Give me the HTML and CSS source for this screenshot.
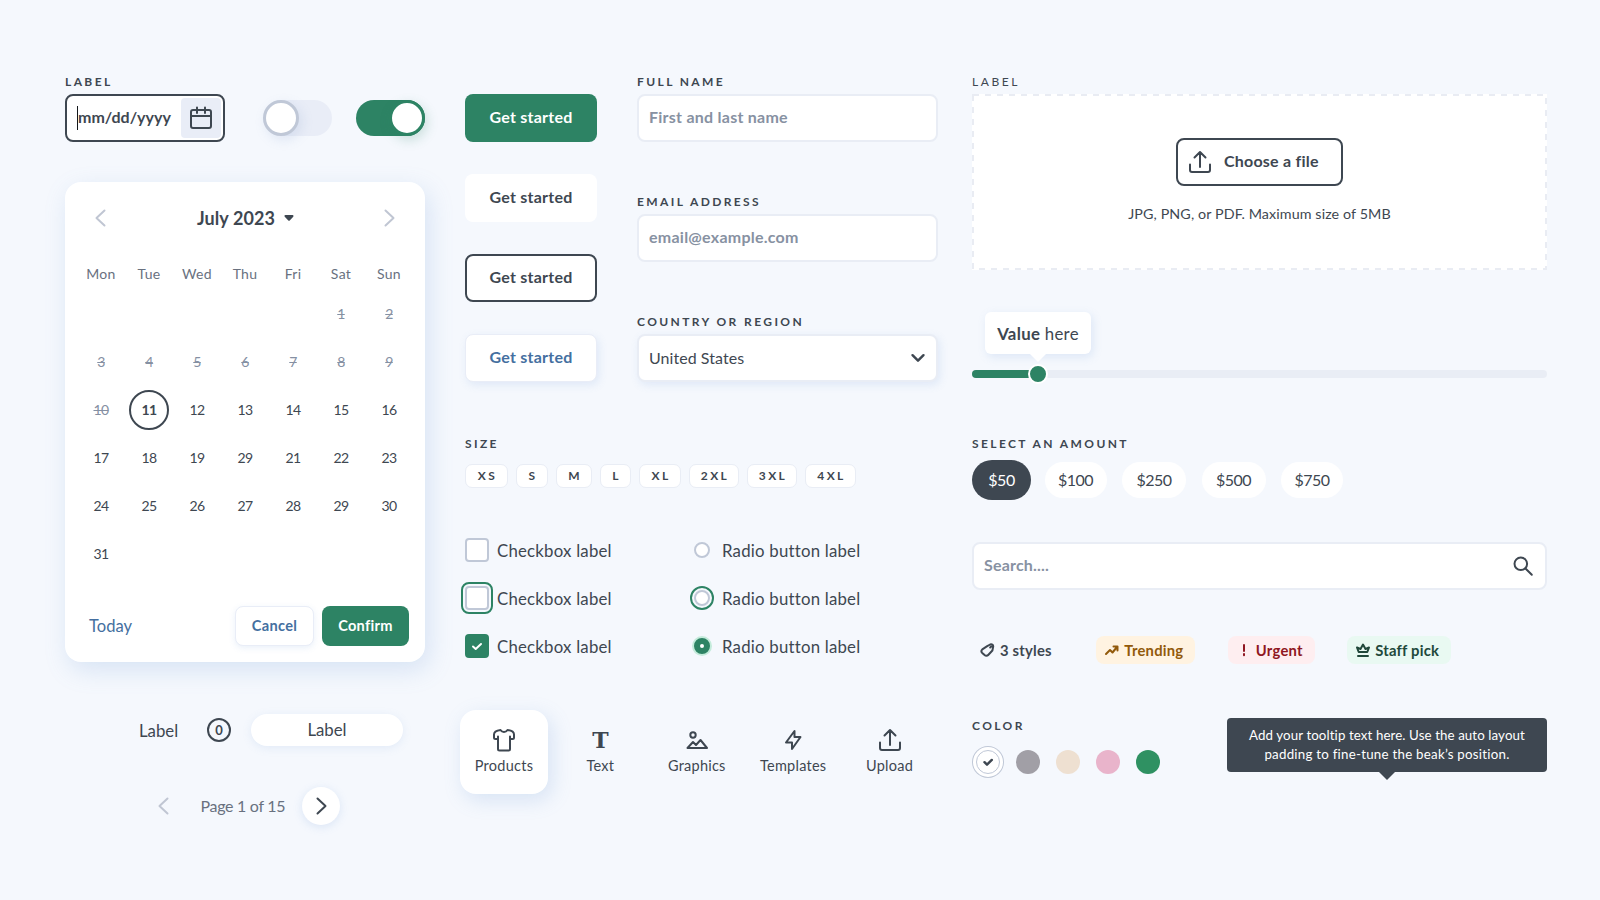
FILE: index.html
```html
<!DOCTYPE html>
<html lang="en">
<head>
    <meta charset="UTF-8">
    <meta name="viewport" content="width=device-width, initial-scale=1.0">
    <title>UI Components</title>
    <link rel="stylesheet" href="styles.css">
</head>
<body>
    <div class="page">
        <!-- Date, toggles, calendar -->
        <div class="col col-left">
            <div class="top-row">
                <div class="field date-field">
                    <label class="label">LABEL</label>
                    <div class="date-input">
                        <span class="date-text">mm/dd/yyyy</span>
                        <button class="date-btn">
                            <svg class="icon" width="24" height="24" viewBox="0 0 24 24"><rect x="2" y="4" width="20" height="18" rx="2"/><path d="M2 10h20M8 1.5V7M16 1.5V7"/></svg>
                        </button>
                    </div>
                </div>
                <div class="toggle"><div class="knob"></div></div>
                <div class="toggle on"><div class="knob"></div></div>
            </div>

            <div class="calendar">
                <div class="cal-header">
                    <svg class="icon pale" width="24" height="24" viewBox="0 0 24 24"><path d="M15.5 4.5L7.5 12l8 7.5"/></svg>
                    <div class="cal-title">July 2023 <svg class="caret" width="10" height="6" viewBox="0 0 10 6"><path d="M1.500 1h7L5 4.800z"/></svg></div>
                    <svg class="icon pale" width="24" height="24" viewBox="0 0 24 24"><path d="M8.5 4.5l8 7.5-8 7.5"/></svg>
                </div>
                <div class="weekdays">
                    <span>Mon</span><span>Tue</span><span>Wed</span><span>Thu</span><span>Fri</span><span>Sat</span><span>Sun</span>
                </div>
                <div class="days">
                    <span class="past first">1</span><span class="past">2</span>
                    <span class="past">3</span><span class="past">4</span><span class="past">5</span><span class="past">6</span><span class="past">7</span><span class="past">8</span><span class="past">9</span>
                    <span class="past">10</span><span class="today">11</span><span>12</span><span>13</span><span>14</span><span>15</span><span>16</span>
                    <span>17</span><span>18</span><span>19</span><span>29</span><span>21</span><span>22</span><span>23</span>
                    <span>24</span><span>25</span><span>26</span><span>27</span><span>28</span><span>29</span><span>30</span>
                    <span>31</span>
                </div>
                <div class="cal-footer">
                    <a class="today-link">Today</a>
                    <button class="btn-small cancel">Cancel</button>
                    <button class="btn-small confirm">Confirm</button>
                </div>
            </div>

            <div class="segment">
                <div class="segment-left">Label <span class="count">0</span></div>
                <div class="segment-pill">Label</div>
            </div>

            <div class="pagination">
                <svg class="icon pale" width="24" height="24" viewBox="0 0 24 24"><path d="M15.5 4.5L7.5 12l8 7.5"/></svg>
                <span class="page-text">Page 1 of 15</span>
                <button class="page-next">
                    <svg class="icon" width="24" height="24" viewBox="0 0 24 24"><path d="M8.500 4.500l8 7.500-8 7.500"/></svg>
                </button>
            </div>
        </div>

        <!-- Buttons, inputs, choices, tabs -->
        <div class="col col-mid">
            <div class="forms">
                <div class="buttons">
                    <button class="btn primary">Get started</button>
                    <button class="btn plain">Get started</button>
                    <button class="btn outline">Get started</button>
                    <button class="btn raised">Get started</button>
                </div>
                <div class="fields">
                    <div class="field">
                        <label class="label" for="name">FULL NAME</label>
                        <input class="input" type="text" id="name" placeholder="First and last name">
                    </div>
                    <div class="field">
                        <label class="label" for="email">EMAIL ADDRESS</label>
                        <input class="input" type="text" id="email" placeholder="email@example.com">
                    </div>
                    <div class="field">
                        <label class="label">COUNTRY OR REGION</label>
                        <div class="input select">
                            <span>United States</span>
                            <svg class="icon thick" width="16" height="16" viewBox="0 0 16 16"><path d="M2.5 6.200L8 11.700l5.500-5.500"/></svg>
                        </div>
                    </div>
                </div>
            </div>

            <div class="sizes">
                <div class="label">SIZE</div>
                <div class="size-list">
                    <span class="size w43">XS</span><span class="size w32">S</span><span class="size w36">M</span><span class="size w31">L</span><span class="size w42">XL</span><span class="size w50">2XL</span><span class="size w50">3XL</span><span class="size w51">4XL</span>
                </div>
            </div>

            <div class="choices">
                <div class="choice"><span class="check"></span><span class="choice-text">Checkbox label</span></div>
                <div class="choice"><span class="radio-slot"><span class="radio"></span></span><span class="choice-text">Radio button label</span></div>
                <div class="choice"><span class="check focus"></span><span class="choice-text">Checkbox label</span></div>
                <div class="choice"><span class="radio-slot"><span class="radio focus"></span></span><span class="choice-text">Radio button label</span></div>
                <div class="choice"><span class="check checked"><svg class="icon thick" width="24" height="24" viewBox="0 0 24 24"><path d="M8 12.5l2.700 2.500L16 10"/></svg></span><span class="choice-text">Checkbox label</span></div>
                <div class="choice"><span class="radio-slot"><span class="radio selected"></span></span><span class="choice-text">Radio button label</span></div>
            </div>

            <div class="tabs">
                <div class="tab active">
                    <svg class="icon" width="24" height="24" viewBox="0 0 24 24"><path d="M6 8.500V21a1.500 1.500 0 0 0 1.500 1.500h9A1.500 1.500 0 0 0 18 21V8.500"/><path d="M6 11H3.500A1.500 1.500 0 0 1 2 9.500V6.500C2 4 4 2.500 8.500 2c1 1.500 2 2 3.500 2s2.500-.5 3.500-2C20 2.500 22 4 22 6.500v3a1.500 1.500 0 0 1-1.500 1.500H18"/></svg>
                    Products
                </div>
                <div class="tab">
                    <span class="t-icon">T</span>
                    Text
                </div>
                <div class="tab">
                    <svg class="icon" width="24" height="24" viewBox="0 0 24 24"><circle cx="8" cy="7" r="2.700"/><path d="M2.500 20L8 14l3 3 4.500-5 6.500 8z"/></svg>
                    Graphics
                </div>
                <div class="tab">
                    <svg class="icon" width="24" height="24" viewBox="0 0 24 24"><path d="M13.500 3L5 14.500H11L11 21l8.500-12h-6z"/></svg>
                    Templates
                </div>
                <div class="tab">
                    <svg class="icon" width="24" height="24" viewBox="0 0 24 24"><path d="M2 14.500V20a2 2 0 0 0 2 2h16a2 2 0 0 0 2-2v-5.500M12 17V2M6.500 7.500L12 2l5.500 5.500"/></svg>
                    Upload
                </div>
            </div>
        </div>

        <!-- Upload, slider, tags, colors -->
        <div class="col col-right">
            <div class="label light">LABEL</div>
            <div class="dropzone">
                <svg class="dash" width="575" height="176"><rect x="1" y="1" width="573" height="174"/></svg>
                <button class="file-btn">
                    <svg class="icon" width="24" height="24" viewBox="0 0 24 24"><path d="M2 14.500V20a2 2 0 0 0 2 2h16a2 2 0 0 0 2-2v-5.500M12 17V2M6.500 7.500L12 2l5.500 5.500"/></svg>
                    <span>Choose a file</span>
                </button>
                <p class="hint">JPG, PNG, or PDF. Maximum size of 5MB</p>
            </div>

            <div class="slider">
                <div class="bubble"><b>Value</b> here</div>
                <div class="track">
                    <div class="track-fill"></div>
                    <div class="handle"></div>
                </div>
            </div>

            <div class="amounts">
                <div class="label">SELECT AN AMOUNT</div>
                <div class="amount-list">
                    <span class="amount selected">$50</span><span class="amount narrow">$100</span><span class="amount">$250</span><span class="amount">$500</span><span class="amount narrow">$750</span>
                </div>
            </div>

            <div class="search">
                <input class="search-input" type="text" placeholder="Search....">
                <svg class="icon" width="24" height="24" viewBox="0 0 24 24"><circle cx="9.800" cy="9.800" r="6.300"/><path d="M14.500 14.500l6.300 6.300"/></svg>
            </div>

            <div class="tags">
                <span class="tag"><svg class="icon" width="16" height="16" viewBox="0 0 16 16"><path d="M7.200 4.200L10.200 2.500c1.500-.8 3.200.3 3 2L12.400 8.500 8.200 13a2.500 2.500 0 0 1-3.600.1L2.200 10.900a2.500 2.500 0 0 1 .1-3.500zM10.200 5.500l1-1"/></svg><span>3 styles</span></span>
                <span class="tag trending"><svg class="icon" width="16" height="16" viewBox="0 0 16 16"><path d="M2 12l4-4 2.500 2.500L13 5M9.500 4.500H13.500V8.500"/></svg><span>Trending</span></span>
                <span class="tag urgent"><svg class="icon" width="16" height="16" viewBox="0 0 16 16"><path d="M8 3v6M8 12v1.200"/></svg><span>Urgent</span></span>
                <span class="tag staff"><svg class="icon" width="16" height="16" viewBox="0 0 16 16"><path d="M3.700 10L2 5.500l3.500 1.500L8 2.500l2.500 4.500L14 5.500 12.300 10zM3 14h10"/></svg><span>Staff pick</span></span>
            </div>

            <div class="bottom-row">
                <div class="colors">
                    <div class="label">COLOR</div>
                    <div class="swatches">
                        <span class="swatch white"><svg class="icon thick" width="24" height="24" viewBox="0 0 24 24"><path d="M8.500 12.200l2.500 2.500 4.800-4.800"/></svg></span>
                        <span class="swatch gray"></span>
                        <span class="swatch sand"></span>
                        <span class="swatch pink"></span>
                        <span class="swatch green"></span>
                    </div>
                </div>
                <div class="tooltip">Add your tooltip text here. Use the auto layout<br><span class="wide">padding to fine-tune the beak’s position.</span></div>
            </div>
        </div>
    </div>
</body>
</html>
```
FILE: styles.css
```css
* {
    box-sizing: border-box;
}
body {
    margin: 0;
    background-color: #f5f8fd;
    font-family: Lato, "Open Sans", sans-serif;
    font-size: 16px;
    color: #3e4751;
}
button, input {
    font-family: inherit;
    margin: 0;
    padding: 0;
}
button {
    border: none;
    cursor: pointer;
    color: #3e4751;
}
.page {
    display: flex;
    width: 1600px;
    height: 900px;
    padding: 70px 0 0 65px;
    overflow: hidden;
}
.col {
    flex: none;
}
.col-left {
    width: 360px;
    margin-right: 40px;
}
.col-mid {
    width: 473px;
    margin-right: 34px;
}
.col-right {
    width: 575px;
}
.label {
    display: block;
    height: 24px;
    line-height: 24px;
    font-size: 12px;
    font-weight: bold;
    letter-spacing: 2.4px;
    white-space: nowrap;
}
.icon {
    display: block;
    flex: none;
    fill: none;
    stroke: #3e4751;
    stroke-width: 2;
    stroke-linecap: round;
    stroke-linejoin: round;
}
.icon.thick {
    stroke-width: 2.4;
}
.icon.pale {
    stroke: #c0c6d3;
}

/* date + toggles */
.top-row {
    display: flex;
    align-items: flex-end;
}
.date-field {
    width: 160px;
    margin-right: 38px;
}
.date-input {
    display: flex;
    align-items: center;
    justify-content: space-between;
    height: 48px;
    padding: 0 2px 0 10px;
    border: 2px solid #3e4751;
    border-radius: 8px;
    background-color: #fff;
}
.date-text {
    height: 24px;
    border-left: 1px solid #14181c;
    font-weight: bold;
    line-height: 22px;
}
.date-btn {
    display: flex;
    align-items: center;
    justify-content: center;
    width: 40px;
    height: 40px;
    border-radius: 4px;
    background-color: #e9edf7;
}
.toggle {
    width: 69px;
    height: 36px;
    margin-bottom: 6px;
    border-radius: 18px;
    background-color: #e9edf7;
}
.toggle .knob {
    width: 36px;
    height: 36px;
    border: 3px solid #c0c8d7;
    border-radius: 50%;
    background-color: #fff;
    box-shadow: 3px 4px 12px rgba(120, 150, 200, 0.18);
}
.toggle.on {
    display: flex;
    justify-content: flex-end;
    margin-left: 24px;
    background-color: #2d8364;
}
.toggle.on .knob {
    border-color: #2d8364;
    box-shadow: 2px 4px 12px rgba(45, 131, 100, 0.22);
}

/* calendar */
.calendar {
    height: 480px;
    margin-top: 40px;
    padding: 24px 12px 16px;
    border-radius: 16px;
    background-color: #fff;
    box-shadow: 4px 8px 24px rgba(110, 155, 215, 0.22);
}
.cal-header {
    display: flex;
    align-items: center;
    justify-content: space-between;
    height: 24px;
    padding: 0 12px;
    margin-bottom: 28px;
}
.cal-title {
    display: flex;
    align-items: center;
    gap: 9px;
    margin-left: 1px;
    font-size: 18px;
    font-weight: bold;
    letter-spacing: 0.1px;
}
.caret {
    fill: #3e4751;
    stroke: #3e4751;
    stroke-width: 2;
    stroke-linejoin: round;
}
.weekdays, .days {
    display: grid;
    grid-template-columns: repeat(7, 48px);
    font-size: 14px;
    text-align: center;
}
.weekdays {
    line-height: 32px;
    color: #69717f;
    letter-spacing: 0.3px;
}
.days {
    grid-auto-rows: 48px;
    line-height: 48px;
    letter-spacing: -0.6px;
}
.days .past {
    color: #8590a3;
    text-decoration: line-through;
}
.days .first {
    grid-column: 6;
}
.days .today {
    width: 40px;
    height: 40px;
    margin: 4px;
    line-height: 36px;
    border: 2px solid #3e4751;
    border-radius: 50%;
    font-weight: bold;
}
.cal-footer {
    display: flex;
    align-items: center;
    gap: 8px;
    margin-top: 28px;
    padding: 0 4px 0 12px;
}
.today-link {
    margin-right: auto;
    color: #446fa0;
    font-size: 16.6px;
}
.btn-small {
    height: 40px;
    padding-bottom: 1px;
    border-radius: 8px;
    font-size: 14.6px;
    font-weight: bold;
    letter-spacing: 0.3px;
}
.cancel {
    width: 79px;
    border: 1px solid #e9edf7;
    background-color: #fff;
    color: #446fa0;
    box-shadow: 0 2px 6px rgba(110, 155, 215, 0.15);
}
.confirm {
    width: 87px;
    background-color: #2d8364;
    color: #fff;
}

/* segmented label */
.segment {
    display: flex;
    align-items: center;
    height: 32px;
    margin: 52px 0 0 73px;
    font-size: 16.8px;
}
.segment-left {
    display: flex;
    align-items: center;
    justify-content: space-between;
    width: 93px;
    padding-left: 1px;
}
.count {
    width: 24px;
    height: 24px;
    border: 2px solid #3e4751;
    border-radius: 50%;
    font-size: 13px;
    font-weight: bold;
    line-height: 20px;
    text-align: center;
}
.segment-pill {
    width: 152px;
    margin-left: 20px;
    border-radius: 16px;
    background-color: #fff;
    line-height: 32px;
    text-align: center;
    box-shadow: 0 2px 10px rgba(110, 155, 215, 0.14);
}
.pagination {
    display: flex;
    align-items: center;
    margin: 41px 0 0 87px;
}
.page-text {
    margin-left: 24.5px;
    width: 84.5px;
    padding-bottom: 1px;
    color: #69717f;
    letter-spacing: -0.3px;
    white-space: nowrap;
}
.page-next {
    display: flex;
    align-items: center;
    justify-content: center;
    width: 38px;
    height: 38px;
    margin-left: 17px;
    border-radius: 50%;
    background-color: #fff;
    box-shadow: 0 2px 10px rgba(110, 155, 215, 0.2);
}

/* buttons + inputs */
.forms {
    display: flex;
    gap: 40px;
}
.buttons {
    display: flex;
    flex-direction: column;
    gap: 32px;
    width: 132px;
    padding-top: 24px;
}
.btn {
    height: 48px;
    padding-bottom: 3px;
    border-radius: 8px;
    font-size: 16px;
    font-weight: bold;
    letter-spacing: 0.25px;
}
.primary {
    background-color: #2d8364;
    color: #fff;
}
.plain, .outline, .raised {
    background-color: #fff;
}
.outline {
    border: 2px solid #3e4751;
}
.raised {
    border: 1px solid #e9edf7;
    color: #446fa0;
    box-shadow: 2px 3px 8px rgba(110, 155, 215, 0.16);
}
.fields {
    display: flex;
    flex-direction: column;
    gap: 48px;
    width: 301px;
}
.input {
    display: block;
    width: 100%;
    height: 48px;
    padding: 0 10px 3px;
    border: 2px solid #e9edf5;
    border-radius: 8px;
    background-color: #fff;
    font-size: 16px;
    font-weight: bold;
    letter-spacing: 0.25px;
}
.input::placeholder, .search-input::placeholder {
    color: #8791a2;
    opacity: 1;
}
.select {
    display: flex;
    align-items: center;
    justify-content: space-between;
    padding-bottom: 2px;
    font-weight: normal;
    letter-spacing: 0.05px;
    box-shadow: 2px 3px 8px rgba(110, 155, 215, 0.16);
}

/* sizes */
.sizes {
    margin-top: 50px;
}
.size-list {
    display: flex;
    gap: 8px;
    margin-top: 8px;
}
.size {
    height: 24px;
    padding-left: 2px;
    border: 1px solid #e9edf5;
    border-radius: 7px;
    background-color: #fff;
    font-size: 12px;
    font-weight: bold;
    line-height: 22px;
    letter-spacing: 2.4px;
    text-align: center;
}
.w31 { width: 31px; }
.w32 { width: 32px; }
.w36 { width: 36px; }
.w42 { width: 42px; }
.w43 { width: 43px; }
.w50 { width: 50px; }
.w51 { width: 51px; }

/* checkboxes + radios */
.choices {
    display: grid;
    grid-template-columns: 225px 1fr;
    row-gap: 24px;
    margin-top: 50px;
}
.choice {
    display: flex;
    align-items: center;
    gap: 8px;
    height: 24px;
}
.choice-text {
    font-size: 16.8px;
    letter-spacing: 0.22px;
}
.check {
    width: 24px;
    height: 24px;
    border: 2px solid #c0c8d7;
    border-radius: 4px;
    background-color: #fff;
}
.check.focus {
    outline: 2px solid #2d8364;
    outline-offset: 2px;
}
.checked {
    border: none;
    background-color: #2d8364;
}
.checked .icon {
    stroke: #fff;
    stroke-width: 2;
}
.radio-slot {
    display: flex;
    align-items: center;
    justify-content: center;
    width: 24px;
    height: 24px;
}
.radio {
    width: 16px;
    height: 16px;
    border: 2px solid #c0c8d7;
    border-radius: 50%;
    background-color: #fff;
}
.radio.focus {
    outline: 2px solid #2d8364;
    outline-offset: 2px;
}
.radio.selected {
    border: 6px solid #2d8364;
    box-shadow: 0 0 0 2px #c4ebdb;
}

/* tabs */
.tabs {
    display: flex;
    gap: 8.4px;
    margin: 52px 0 0 -5px;
}
.tab {
    display: flex;
    flex-direction: column;
    align-items: center;
    width: 88px;
    height: 84px;
    padding-top: 18px;
    border-radius: 16px;
    font-size: 14.5px;
    line-height: 28px;
    letter-spacing: 0.25px;
}
.tab.active {
    background-color: #fff;
    box-shadow: 4px 6px 20px rgba(110, 155, 215, 0.22);
}
.t-icon {
    height: 24px;
    font-family: "DejaVu Serif", serif;
    font-size: 22px;
    font-weight: bold;
    line-height: 24px;
    letter-spacing: 0;
}

/* upload */
.label.light {
    font-weight: normal;
    letter-spacing: 2.6px;
}
.dropzone {
    position: relative;
    display: flex;
    flex-direction: column;
    align-items: center;
    height: 176px;
    padding-top: 44px;
    background-color: #fff;
}
.dash {
    position: absolute;
    top: 0;
    left: 0;
    fill: none;
    stroke: #e9ecf3;
    stroke-width: 2;
    stroke-dasharray: 6 6;
}
.file-btn {
    display: flex;
    align-items: center;
    gap: 12px;
    width: 167px;
    height: 48px;
    padding-left: 10px;
    border: 2px solid #3e4751;
    border-radius: 8px;
    background-color: #fff;
    font-size: 16px;
    font-weight: bold;
    letter-spacing: 0.22px;
}
.file-btn span {
    padding-bottom: 3px;
}
.hint {
    margin: 18px 0 0;
    font-size: 14.3px;
    line-height: 20px;
    letter-spacing: 0.1px;
}

/* slider */
.slider {
    margin-top: 42px;
}
.bubble {
    position: relative;
    width: 106px;
    height: 42px;
    margin: 0 0 16px 13px;
    border-radius: 6px;
    background-color: #fff;
    font-size: 16.8px;
    line-height: 43px;
    letter-spacing: 0.3px;
    text-align: center;
    box-shadow: 2px 3px 10px rgba(110, 155, 215, 0.18);
}
.bubble::after {
    content: "";
    position: absolute;
    top: 42px;
    left: 45px;
    border: 8px solid transparent;
    border-top-color: #fff;
    border-bottom: none;
}
.track {
    position: relative;
    height: 8px;
    border-radius: 4px;
    background-color: #e9edf5;
}
.track-fill {
    width: 66px;
    height: 8px;
    border-radius: 4px;
    background-color: #2d8364;
}
.handle {
    position: absolute;
    top: -6px;
    left: 56px;
    width: 20px;
    height: 20px;
    border: 2px solid #fff;
    border-radius: 50%;
    background-color: #2d8364;
}

/* amounts */
.amounts {
    margin-top: 54px;
}
.amount-list {
    display: flex;
    align-items: center;
    gap: 15.5px;
    height: 40px;
    margin-top: 4px;
}
.amount {
    width: 64px;
    height: 36px;
    border-radius: 18px;
    background-color: #fff;
    line-height: 36px;
    letter-spacing: -0.5px;
    text-align: center;
}
.amount.narrow {
    width: 62px;
}
.amount.selected {
    width: 59px;
    height: 40px;
    margin-right: -2px;
    border-radius: 20px;
    background-color: #3e4751;
    color: #fff;
    line-height: 40px;
}

/* search */
.search {
    display: flex;
    align-items: center;
    height: 48px;
    margin-top: 42px;
    padding: 0 10px 0 10px;
    border: 2px solid #e9edf5;
    border-radius: 8px;
    background-color: #fff;
}
.search-input {
    flex: 1;
    padding-bottom: 3px;
    border: none;
    background: none;
    font-size: 16px;
    font-weight: bold;
    letter-spacing: 0.2px;
}

/* tags */
.tags {
    display: flex;
    gap: 32.5px;
    margin-top: 46px;
}
.tag {
    display: flex;
    align-items: center;
    gap: 4px;
    height: 28px;
    padding: 0 12px 0 8px;
    border-radius: 8px;
    font-size: 14.8px;
    font-weight: bold;
    letter-spacing: 0.22px;
    white-space: nowrap;
}
.tag > span {
    padding-bottom: 1px;
}
.trending {
    background-color: #fff3e1;
    color: #925a0b;
}
.trending .icon {
    stroke: #925a0b;
}
.urgent {
    background-color: #feeef0;
    color: #8f1722;
}
.urgent .icon {
    stroke: #8f1722;
}
.staff {
    background-color: #e9f9f2;
    color: #21483a;
}
.staff .icon {
    stroke: #21483a;
}

/* colors + tooltip */
.bottom-row {
    display: flex;
    justify-content: space-between;
    margin-top: 50px;
}
.swatches {
    display: flex;
    gap: 16px;
    padding: 12px 0 0 4px;
}
.swatch {
    width: 24px;
    height: 24px;
    border-radius: 50%;
}
.white {
    display: flex;
    align-items: center;
    justify-content: center;
    border: 1px solid #c0c8d7;
    background-color: #fff;
    box-shadow: 0 0 0 3px #fff, 0 0 0 4px #c0c8d7;
}
.gray { background-color: #a19fa6; }
.sand { background-color: #eee0d1; }
.pink { background-color: #e9b4cb; }
.green { background-color: #2f9162; }
.tooltip {
    position: relative;
    width: 320px;
    height: 54px;
    margin-top: 4px;
    padding-top: 8px;
    border-radius: 4px;
    background-color: #3e4751;
    color: #fff;
    font-size: 13.3px;
    line-height: 19px;
    letter-spacing: 0.1px;
    text-align: center;
}
.tooltip .wide {
    letter-spacing: 0.25px;
}
.tooltip::after {
    content: "";
    position: absolute;
    top: 54px;
    left: 152px;
    border: 8px solid transparent;
    border-top-color: #3e4751;
    border-bottom: none;
}
```
